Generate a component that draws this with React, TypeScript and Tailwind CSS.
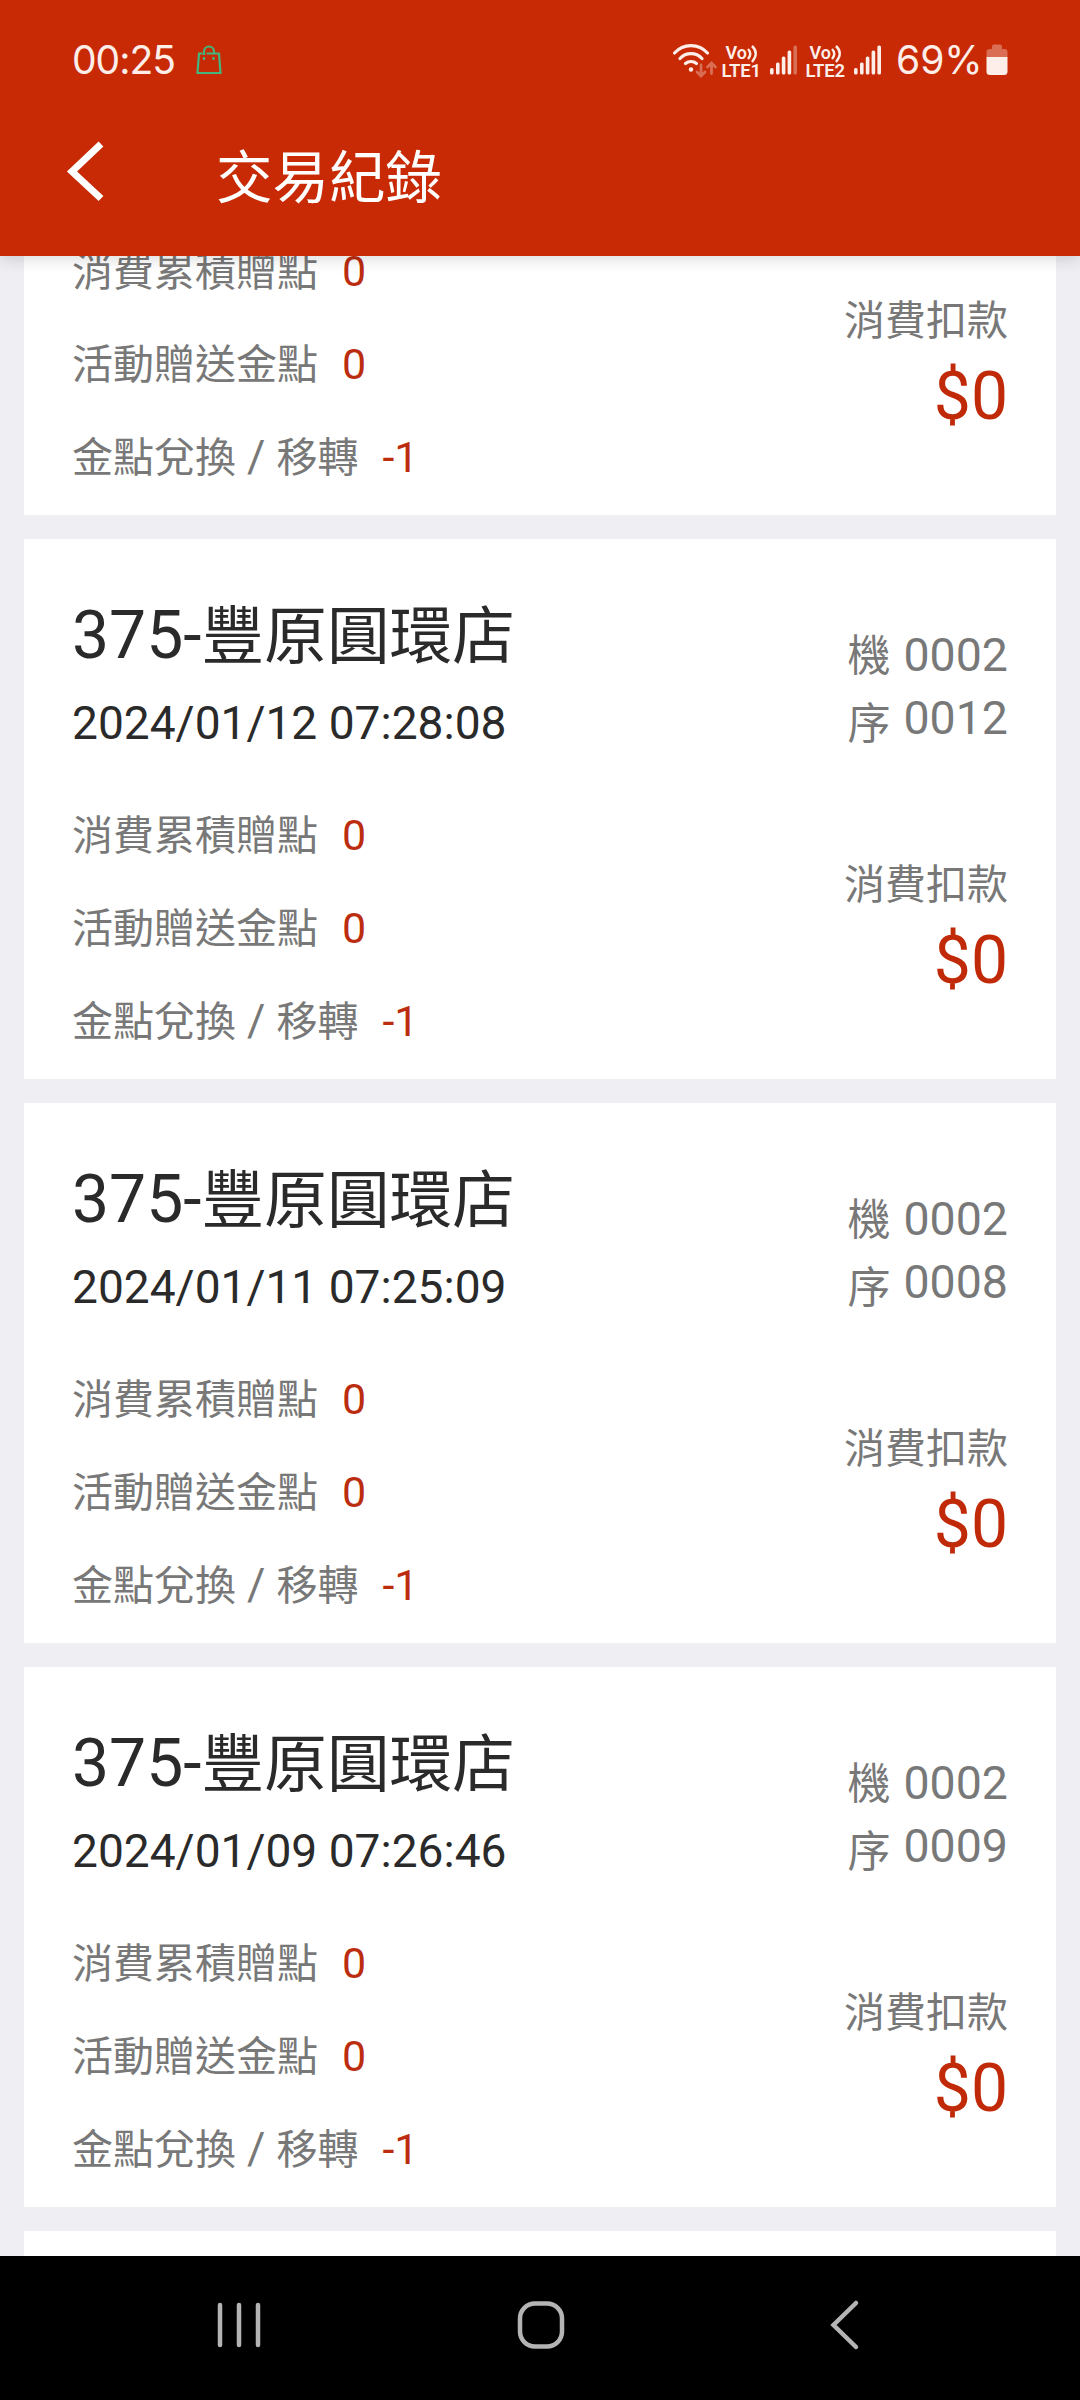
import type { ReactNode } from "react";

type TradeRecord = {
  id: number;
  store?: string;
  name?: string;
  time?: string;
  machine?: string;
  serial?: string;
};

const records: TradeRecord[] = [
  // heading of the first record is scrolled out of view
  { id: 1 },
  { id: 2, store: "375", name: "豐原圓環店", time: "2024/01/12 07:28:08", machine: "0002", serial: "0012" },
  { id: 3, store: "375", name: "豐原圓環店", time: "2024/01/11 07:25:09", machine: "0002", serial: "0008" },
  { id: 4, store: "375", name: "豐原圓環店", time: "2024/01/09 07:26:46", machine: "0002", serial: "0009" },
];

const LteLabel = ({ slot }: { slot: string }) => (
  <svg className="h-[40px] w-[42px] shrink-0" viewBox="0 0 42 40" fill="#fdeeea">
    <text x="4.500" y="19" fontFamily="Roboto" fontSize="18" fontWeight="600" textLength="21.500">Vo</text>
    <path d="M27 9q4.500 4.500 0 10M31 6q7.500 7 0 16" fill="none" stroke="#fdeeea" strokeWidth="2.400" />
    <text x="0.500" y="36.500" fontFamily="Roboto" fontSize="18.500" fontWeight="600" textLength="39.500">{`LTE${slot}`}</text>
  </svg>
);

const Signal = ({ weak }: { weak?: boolean }) => (
  <svg className="h-[30px] w-[28px] shrink-0" viewBox="0 0 28 30" fill="#fdeeea">
    <rect x="0" y="23" width="3.600" height="6.500" rx="1.500" />
    <rect x="6" y="17.500" width="3.600" height="12" rx="1.500" />
    <rect x="11.800" y="11.500" width="3.600" height="18" rx="1.500" />
    <rect x="17.600" y="5.500" width="3.600" height="24" rx="1.500" />
    <rect x="23.400" y="0.500" width="3.600" height="29" rx="1.500" opacity={weak ? 0.35 : 1} />
  </svg>
);

function StatusBar() {
  return (
    <div className="flex h-[120px] items-center px-[72px] font-['Inter',sans-serif] text-[39px] leading-[50px] text-[#fdeeea]">
      <span className="w-[103px] whitespace-nowrap tracking-[-1px]">00:25</span>
      <svg className="ml-[21px] h-[30px] w-[27px]" viewBox="0 0 27 30" fill="none" stroke="#44b57c" strokeWidth="2.200">
        <path d="M6.500 8.500H3L1.500 28h23L23 8.500H10.500M8 10V6.500a5 5 0 0 1 10 0V8.500M8 12v3M17.500 12v3" />
      </svg>
      <div className="ml-auto flex items-center">
        <svg className="h-[40px] w-[49px]" viewBox="0 0 49 40" fill="none" stroke="#fdeeea" strokeWidth="3.200" strokeLinecap="round">
          <path d="M5.500 13a22 22 0 0 1 33 0M11 18.500a15 15 0 0 1 22 0M16.500 23.500a8.500 8.500 0 0 1 11 0" />
          <circle cx="22" cy="29.500" r="2.200" fill="#fdeeea" stroke="none" />
          <path d="M32 25v10.500M28 32l4 4 4-4M42.500 33.500V23.500M38.500 27l4-4 4 4" strokeWidth="2.800" opacity="0.350" />
        </svg>
        <div className="ml-[3px] flex items-center gap-[7px]">
          <LteLabel slot="1" />
          <Signal weak />
          <LteLabel slot="2" />
          <Signal />
        </div>
        <span className="ml-[14px] w-[86px] whitespace-nowrap">69%</span>
        <svg className="ml-[4px] h-[32px] w-[22px]" viewBox="0 0 22 32" fill="#fdeeea">
          <path d="M0.500 13V8Q0.500 5 4 5H6V2.500Q6 0.500 8 0.500H14Q16 0.500 16 2.500V5H18.500Q21.500 5 21.500 8V13z" opacity="0.350" />
          <path d="M0.500 13h21v14.500q0 3.500-3.500 3.500h-14q-3.500 0-3.500-3.500z" />
        </svg>
      </div>
    </div>
  );
}

function AppBar() {
  return (
    <header className="relative z-10 h-[256px] shrink-0 bg-[#c72a05] shadow-[0_3px_15px_rgba(0,0,0,0.150)]">
      <StatusBar />
      <div className="flex items-start">
        <svg className="ml-[64px] mt-[19px] h-[64px] w-[44px]" viewBox="0 0 44 64" fill="none" stroke="#fff" strokeWidth="7">
          <path d="M37 5L8 32.500l29 27" />
        </svg>
        <h1 className="ml-[108px] mt-[19px] text-[56.500px] leading-[80px] text-white">交易紀錄</h1>
      </div>
    </header>
  );
}

function PointRow({ label, value }: { label: ReactNode; value: string }) {
  return (
    <div className="flex h-[93px] items-baseline text-[41px] leading-[93px] text-[#787878]">
      <span>{label}</span>
      <span className="ml-[24px] text-[43px] text-[#bc2d10]">{value}</span>
    </div>
  );
}

function RecordCard({ record }: { record: TradeRecord }) {
  return (
    <article className="flex h-[540px] shrink-0 justify-between bg-white px-[48px]">
      <div>
        <div className="h-[250px]">
          {record.time && (
            <>
              <h2 className="flex items-baseline pt-[57px] leading-[80px] text-[#2a2a2a]">
                <span className="text-[66px]">{record.store}-</span>
                <span className="text-[62.700px]">{record.name}</span>
              </h2>
              <p className="mt-[16px] text-[46.100px] leading-[60px] text-[#2a2a2a]">{record.time}</p>
            </>
          )}
        </div>
        <PointRow label="消費累積贈點" value="0" />
        <PointRow label="活動贈送金點" value="0" />
        <PointRow
          label={
            <>
              金點兌換<span className="text-[44.500px]"> / </span>移轉
            </>
          }
          value="-1"
        />
      </div>
      <div className="flex flex-col items-end text-[#787878]">
        <div className="flex h-[316px] gap-[13px] pt-[85px] text-[46.500px]">
          {record.machine && (
            <>
              <div className="-mt-[2px] text-[43px] leading-[68px]">
                <div>機</div>
                <div>序</div>
              </div>
              <div className="leading-[63px]">
                <div>{record.machine}</div>
                <div>{record.serial}</div>
              </div>
            </>
          )}
        </div>
        <div className="text-[41px] leading-[60px]">消費扣款</div>
        <div className="mt-[6px] text-[66px] leading-[80px] text-[#c02a08]">$0</div>
      </div>
    </article>
  );
}

function NavBar() {
  return (
    <nav className="relative z-10 h-[144px] shrink-0 bg-black">
      <svg className="h-[144px] w-[1080px]" viewBox="0 0 1080 144" fill="none" stroke="#b4b4b4" strokeWidth="4.500" strokeLinecap="round">
        <path d="M220 49v40M239 49v40M258 49v40" />
        <rect x="520" y="47.500" width="42" height="43" rx="15" />
        <path d="M856 47L833.500 69L856 91" />
      </svg>
    </nav>
  );
}

export default function App() {
  return (
    <div className="flex h-[2400px] w-[1080px] flex-col overflow-hidden bg-[#eeeef3] font-['Roboto','Noto_Sans_CJK_TC',sans-serif]">
      <AppBar />
      <main className="flex min-h-0 flex-1 flex-col overflow-hidden px-[24px]">
        {/* list is scrolled part way into the first record */}
        <div className="-mt-[281px] flex flex-col gap-[24px]">
          {records.map((record) => (
            <RecordCard key={record.id} record={record} />
          ))}
          <div className="h-[540px] shrink-0 bg-white" />
        </div>
      </main>
      <NavBar />
    </div>
  );
}
